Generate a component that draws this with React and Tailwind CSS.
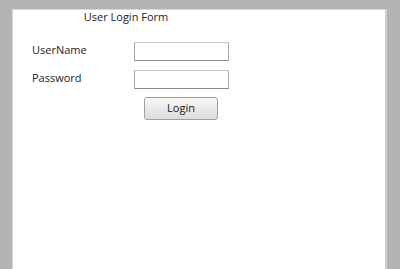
export default function App() {
  return (
    <div className="h-[269px] w-[400px] bg-[#b4b4b4] pl-[12px] pt-[9px] overflow-hidden" style={{ fontFamily: '"Open Sans", "DejaVu Sans", sans-serif' }}>
      <div className="flex h-full w-[375px]">
        <div className="h-full w-[373px] bg-white border-t border-l border-[#d8d8d8] text-[11px] text-[#222]">
          <div className="w-[226px] text-center leading-[14px]">User Login Form</div>
          <div className="pl-[19px] pt-[18px]">
            <div className="flex items-center h-[19px]">
              <div className="w-[102px] -mt-[2px]">UserName</div>
              <div className="w-[95px] h-[19px] border border-[#a8a8a8] border-t-[#c8c8c8] border-b-[#888] bg-white" />
            </div>
            <div className="flex items-center h-[19px] mt-[9px]">
              <div className="w-[102px] -mt-[2px]">Password</div>
              <div className="w-[95px] h-[19px] border border-[#a8a8a8] border-t-[#c8c8c8] border-b-[#888] bg-white" />
            </div>
            <div className="flex mt-[8px]">
              <div className="w-[112px]" />
              <div className="w-[74px] h-[23px] rounded-[3px] border border-[#a0a0a0] bg-gradient-to-b from-[#f8f8f8] to-[#dcdcdc] flex items-center justify-center text-[11px] pb-[1px]">Login</div>
            </div>
          </div>
        </div>
        <div className="h-full w-[2px] bg-[#d0d0d0]" />
      </div>
    </div>
  );
}
